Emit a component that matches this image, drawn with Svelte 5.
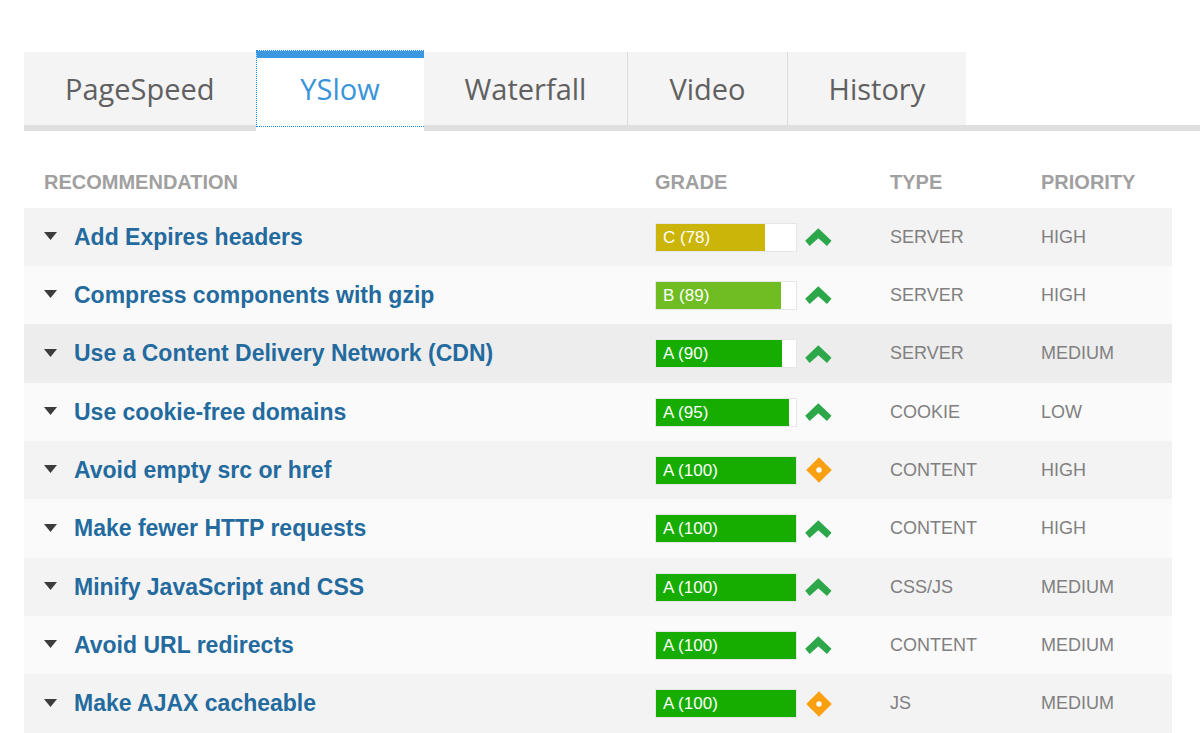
<script>
	const tabs = ["PageSpeed", "YSlow", "Waterfall", "Video", "History"];

	const rules = [
		{ name: "Add Expires headers", grade: "C", score: 78, trend: "up", type: "SERVER", priority: "HIGH" },
		{ name: "Compress components with gzip", grade: "B", score: 89, trend: "up", type: "SERVER", priority: "HIGH" },
		{ name: "Use a Content Delivery Network (CDN)", grade: "A", score: 90, trend: "up", type: "SERVER", priority: "MEDIUM" },
		{ name: "Use cookie-free domains", grade: "A", score: 95, trend: "up", type: "COOKIE", priority: "LOW" },
		{ name: "Avoid empty src or href", grade: "A", score: 100, trend: "same", type: "CONTENT", priority: "HIGH" },
		{ name: "Make fewer HTTP requests", grade: "A", score: 100, trend: "up", type: "CONTENT", priority: "HIGH" },
		{ name: "Minify JavaScript and CSS", grade: "A", score: 100, trend: "up", type: "CSS/JS", priority: "MEDIUM" },
		{ name: "Avoid URL redirects", grade: "A", score: 100, trend: "up", type: "CONTENT", priority: "MEDIUM" },
		{ name: "Make AJAX cacheable", grade: "A", score: 100, trend: "same", type: "JS", priority: "MEDIUM" }
	];

	let activeTab = $state("YSlow");
	let activeRule = $state("Use a Content Delivery Network (CDN)");
</script>

<main class="report">
	<div class="tabs" role="tablist" aria-label="Report sections">
		{#each tabs as tab (tab)}
			<div class="tab" class:is-active={activeTab === tab} role="presentation">
				<button
					type="button"
					role="tab"
					aria-selected={activeTab === tab}
					onclick={() => (activeTab = tab)}
				>
					{tab}
				</button>
			</div>
		{/each}
	</div>

	<div class="panel">
		<table class="rules">
			<colgroup>
				<col />
				<col class="col-grade" />
				<col class="col-type" />
				<col class="col-priority" />
			</colgroup>
			<thead>
				<tr>
					<th scope="col">RECOMMENDATION</th>
					<th scope="col">GRADE</th>
					<th scope="col">TYPE</th>
					<th scope="col">PRIORITY</th>
				</tr>
			</thead>
			<tbody>
				{#each rules as rule (rule.name)}
					<tr
						class:is-current={activeRule === rule.name}
						onmouseenter={() => (activeRule = rule.name)}
					>
						<td>
							<a class="rule-link" href="#details">
								<svg class="arrow" width="13" height="10" viewBox="0 0 13 10" aria-hidden="true">
									<path d="M0 0H13L6.5 8Z" fill="currentColor" />
								</svg>
								<span>{rule.name}</span>
							</a>
						</td>
						<td>
							<div class="grade">
								<div class="bar">
									<div class="bar-fill grade-{rule.grade}" style="width: {rule.score}%">
										{rule.grade} ({rule.score})
									</div>
								</div>
								{#if rule.trend === "up"}
									<svg width="27" height="26" viewBox="0 0 27 26" role="img" aria-label="Better than average">
										<path d="M13.3 4.2L26.5 16.8L22 22L13.3 14.2L4.6 22L0.2 16.8Z" fill="#2ca84a" />
									</svg>
								{:else}
									<svg width="27" height="26" viewBox="0 0 27 26" role="img" aria-label="Average">
										<path d="M14 0.2L26.8 13L14 25.8L1.2 13Z" fill="#f9a011" />
										<circle cx="14" cy="13" r="2.7" fill="#fff" />
									</svg>
								{/if}
							</div>
						</td>
						<td>{rule.type}</td>
						<td>{rule.priority}</td>
					</tr>
				{/each}
			</tbody>
		</table>
	</div>
</main>

<style>
	:global(body) {
		margin: 0;
		background: #fff;
	}

	.report {
		padding: 50px 0 0 24px;
		font-family: "Liberation Sans", Arial, sans-serif;
	}

	.tabs {
		display: flex;
		border-bottom: 6px solid #dfdfdf;
	}

	.tab {
		margin-top: 2px;
		background: #f4f4f4;
	}

	.tab + .tab {
		border-left: 1px solid #dcdcdc;
	}

	.tab.is-active {
		margin-top: 0;
		margin-bottom: -6px;
		padding-bottom: 4px;
		border-top: 1px dotted #2a8ce0;
		border-left: 0;
		background: #fff;
	}

	.tab.is-active + .tab {
		border-left: 0;
	}

	.tab button {
		display: block;
		height: 73px;
		padding: 0 41px;
		border: 0;
		background: none;
		color: #606060;
		font-family: "Open Sans", "Noto Sans", sans-serif;
		font-size: 29px;
		font-weight: 500;
		cursor: pointer;
	}

	.tab.is-active button {
		min-width: 168px;
		height: 76px;
		padding-bottom: 7px;
		border: 1px dotted #2a8ce0;
		border-top: 7px solid #3a97e0;
		border-right: 0;
		color: #3a94d9;
	}

	.panel {
		padding: 25px 28px 0 0;
	}

	.rules {
		width: 100%;
		border-collapse: collapse;
		table-layout: fixed;
	}

	.col-grade {
		width: 235px;
	}

	.col-type,
	.col-priority {
		width: 151px;
	}

	th {
		height: 52px;
		padding: 0 0 0 20px;
		color: #a0a0a0;
		font-size: 20px;
		text-align: left;
	}

	td {
		height: 58px;
		padding: 0 0 0 20px;
		color: #808080;
		font-size: 18px;
	}

	tbody tr {
		background: #fafafa;
	}

	tbody tr:nth-child(odd) {
		background: #f3f3f3;
	}

	tbody tr:nth-child(3n) td {
		height: 59px;
	}

	tbody tr.is-current {
		background: #ededed;
	}

	.rule-link {
		display: flex;
		align-items: center;
		gap: 17px;
		color: #236a9e;
		font-size: 23px;
		font-weight: 700;
		text-decoration: none;
	}

	.arrow {
		color: #3c3c3c;
	}

	.grade {
		display: flex;
		align-items: center;
		gap: 8px;
	}

	.bar {
		width: 140px;
		border: 1px solid #e6e6e6;
		background: #fff;
	}

	.bar-fill {
		box-sizing: border-box;
		height: 27px;
		padding-left: 7px;
		color: #fff;
		font-size: 17px;
		line-height: 27px;
		white-space: nowrap;
	}

	.grade-A {
		background: #17ac00;
	}

	.grade-B {
		background: #6fbd22;
	}

	.grade-C {
		background: #cbb508;
	}
</style>
